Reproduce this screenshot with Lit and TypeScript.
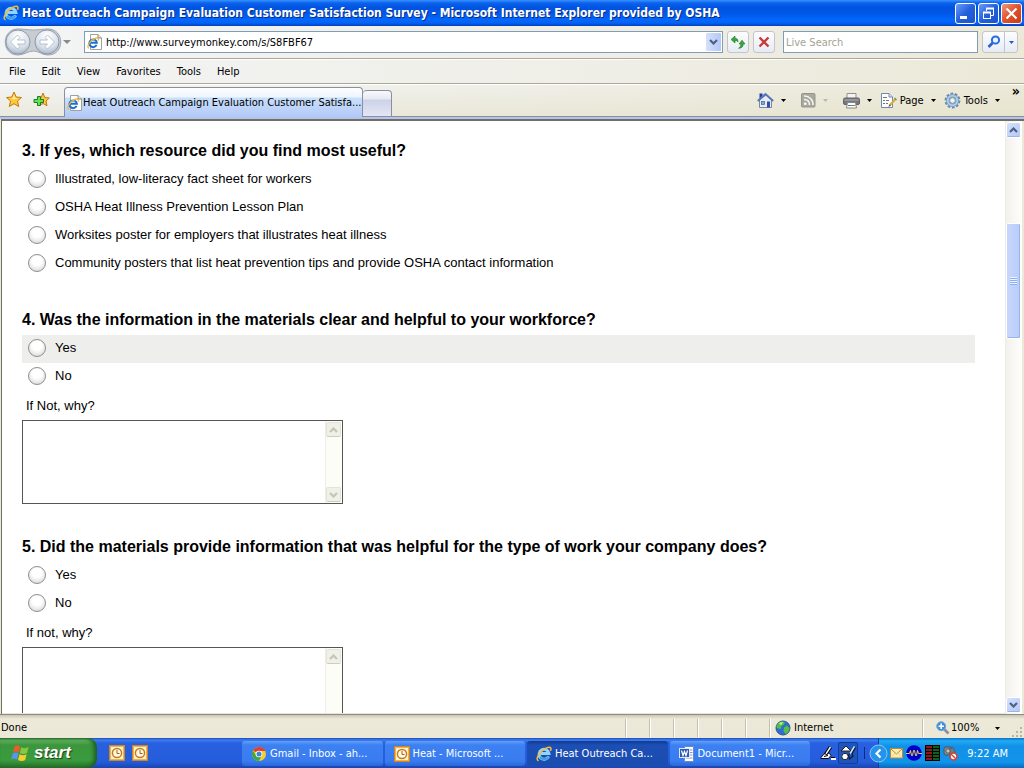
import { LitElement, html, css, svg } from "lit";
import { customElement, property } from "lit/decorators.js";

const ieMark = svg`
  <path d="M12.6 10.4A5 5 0 1 1 13 7.6H4.4" fill="none" stroke="#1c6fd0" stroke-width="2.6"/>
  <path d="M4.2 5.6A4.6 4.6 0 0 1 10.5 3.9" fill="none" stroke="#6fc0f5" stroke-width="1.2"/>
  <path d="M2.6 14.8C-.4 14 1.6 8.6 6.2 4.6C10 1.2 14.2 .4 14.9 2.2C15.2 3 14.9 4 14.4 4.9" fill="none" stroke="#f3b32b" stroke-width="1.5"/>`;

const icons: Record<string, unknown> = {
  ieTitle: html`<svg width="16" height="16" viewBox="0 0 16 16">
    <path d="M12.6 10.4A5 5 0 1 1 13 7.6H4.4" fill="none" stroke="#8fd4fb" stroke-width="3"/>
    <path d="M12.2 11A5 5 0 0 1 4 11.2" fill="none" stroke="#3a9be8" stroke-width="2"/>
    <path d="M2.6 14.8C-.4 14 1.6 8.6 6.2 4.6C10 1.2 14.2 .4 14.9 2.2C15.2 3 14.9 4 14.4 4.9" fill="none" stroke="#f6bb35" stroke-width="1.5"/></svg>`,
  iePage: html`<svg width="16" height="16" viewBox="0 0 16 16">
    <path d="M3.5 .5H11L14.5 4V15.5H3.5Z" fill="#fff" stroke="#a3a297"/><path d="M11 .5V4H14.5" fill="#e8e8e0" stroke="#8a8a80"/>
    <g transform="translate(0 3) scale(.76)">${ieMark}</g></svg>`,
  back: html`<svg width="58" height="28" viewBox="0 0 58 28">
    <defs><radialGradient id="orb" cx=".5" cy=".25" r=".8"><stop offset="0" stop-color="#fff"/><stop offset=".6" stop-color="#dbe2ea"/><stop offset="1" stop-color="#a3b2c6"/></radialGradient></defs>
    <path d="M14 1C20 1 24 2 29.5 2S39 1 44 1C61 1 61 27 44 27C38 27 35 23 29.5 23S20 27 14 27C-3 27-3 1 14 1Z" fill="#c9cdd2" stroke="#a2a7ae"/>
    <circle cx="14" cy="14" r="12" fill="url(#orb)" stroke="#8a99ae"/><circle cx="43" cy="14" r="12" fill="url(#orb)" stroke="#8a99ae"/>
    <path d="M6.5 14L13.5 7L16 9.5L13.5 12H21V16H13.5L16 18.5L13.5 21Z" fill="#fff" stroke="#a5b2c2" stroke-width=".8"/>
    <path d="M50.5 14L43.5 7L41 9.5L43.5 12H36V16H43.5L41 18.5L43.5 21Z" fill="#fff" stroke="#a5b2c2" stroke-width=".8"/></svg>`,
  refresh: html`<svg width="16" height="16" viewBox="0 0 16 16"><path d="M1 5.5L5 2V4.3C7 4.3 8 5 8 8C7.3 6.8 6.5 6.6 5 6.7V9Z" fill="#3aa53a" stroke="#1b7d22" stroke-width=".6"/><path d="M15 10L12 6.2L9 10H10.800C10.800 12 10.300 13.200 8.500 14.300C11.500 14.300 13.200 13 13.200 10Z" fill="#3aa53a" stroke="#1b7d22" stroke-width=".6"/></svg>`,
  stop: html`<svg width="12" height="12" viewBox="0 0 12 12"><path d="M1.5 1.5L10.5 10.5M10.5 1.5L1.5 10.5" stroke="#c83b3b" stroke-width="2.4"/></svg>`,
  search: html`<svg width="14" height="14" viewBox="0 0 14 14"><circle cx="8.5" cy="5" r="3.6" fill="#eaf4ff" stroke="#2d6be0" stroke-width="2"/><path d="M5.5 8L1.5 12" stroke="#2d5fc8" stroke-width="2.6"/></svg>`,
  star: html`<svg width="16" height="17" viewBox="0 0 16 17"><path d="M8 1L10.2 6L15.5 6.5L11.5 10L12.7 15.5L8 12.7L3.3 15.5L4.5 10L.5 6.5L5.8 6Z" fill="#fcc93c" stroke="#c4790f"/><path d="M8 3.5L9.2 7H12L8 8.5L5 7.5L7 7Z" fill="#fff0a8"/></svg>`,
  addStar: html`<svg width="17" height="17" viewBox="0 0 17 17"><path d="M10 2L11.8 6.5L16.3 7L13 10L14 14.7L10 12.5L6 14.7L7 10L4 7L8.3 6.5Z" fill="#fcc93c" stroke="#c4790f"/><path d="M4.5 5.5H7.5V8.5H10.5V11.5H7.5V14.5H4.5V11.5H1V8.5H4.5Z" fill="#6fdc5c" stroke="#178020"/></svg>`,
  home: html`<svg width="17" height="17" viewBox="0 0 17 17"><path d="M2.5 1.5H5.5V5L2.5 7Z" fill="#1c3fae"/><path d="M2.5 8L9 3L14.5 8V15.5H2.5Z" fill="#e9ebf2" stroke="#7b86a0"/><path d="M.8 9L8.5 2L16.2 9" fill="none" stroke="#5876b8" stroke-width="2"/><rect x="4.5" y="9.5" width="3" height="3" fill="#6fb1e4" stroke="#4a5f8a" stroke-width=".7"/><rect x="10" y="9.5" width="3" height="6" fill="#2f4fae"/></svg>`,
  rss: html`<svg width="15" height="15" viewBox="0 0 15 15"><rect x=".5" y=".5" width="13.5" height="13.5" rx="1" fill="#aaa99f" stroke="#96958c"/><circle cx="4.2" cy="10.8" r="1.3" fill="#fff"/><path d="M3 6.5A5 5 0 0 1 8.5 12M3 3A8.5 8.5 0 0 1 12 12" fill="none" stroke="#f4f4f0" stroke-width="1.6"/></svg>`,
  printer: html`<svg width="17" height="16" viewBox="0 0 17 16"><path d="M4 .5H13V6H4Z" fill="#f4f4f4" stroke="#909090"/><rect x=".5" y="5" width="16" height="6.500" rx="1.500" fill="#77787c" stroke="#606268"/><path d="M1.500 7H15.500" stroke="#b4b6ba"/><path d="M4.500 9.500H12.500L13.500 15H3.500Z" fill="#fff" stroke="#888"/><path d="M5 12.500H8" stroke="#3a7ad0"/><path d="M8 12.500H10" stroke="#42a642"/><path d="M10 12.500H12.500" stroke="#d5683c"/></svg>`,
  page: html`<svg width="17" height="17" viewBox="0 0 17 17"><path d="M1.5 1.5H9L12.5 5V15.5H1.5Z" fill="#fff" stroke="#7389ad"/><path d="M9 1.5V5H12.5" fill="#dbe5f3" stroke="#7389ad"/><path d="M3 5.5H7M3 8.5H5M6 8.5H9M3 11.5H5M6 11.5H8" stroke="#66758c"/><path d="M15.5 7L9.5 13.5" stroke="#e0a93b" stroke-width="2.2"/><path d="M9.7 12.2L8.2 15L11 13.8Z" fill="#4f5a55"/><path d="M14.5 6L16.5 8" stroke="#6a9a5c" stroke-width="1.5"/></svg>`,
  gear: html`<svg width="17" height="17" viewBox="0 0 17 17"><circle cx="8.5" cy="8.5" r="6.9" fill="none" stroke="#6787a8" stroke-width="2" stroke-dasharray="2.7 1.635"/><circle cx="8.5" cy="8.5" r="4.7" fill="none" stroke="#7ba2c6" stroke-width="3.6"/><circle cx="8.5" cy="8.5" r="4.7" fill="none" stroke="#b4d2ec" stroke-width="1.6"/><circle cx="8.5" cy="8.5" r="2.8" fill="#f4f3ea" stroke="#5f81a4" stroke-width=".8"/></svg>`,
  globe: html`<svg width="16" height="16" viewBox="0 0 16 16"><circle cx="8" cy="8" r="7" fill="#2d6fd0" stroke="#31518f"/><path d="M3 3.5C5 1 9 1.2 10 2.2L8.5 5L6.5 6L5.5 9L2 8C1 6.5 1.5 5 3 3.5ZM9 7.5L12 5.5L14.5 8C14.5 11 12.5 13.5 10.5 14L8.5 11Z" fill="#55c044"/><path d="M4 3.5Q6 1.8 8 2.5L6 5Z" fill="#c6f2b0"/></svg>`,
  zoom: html`<svg width="14" height="14" viewBox="0 0 14 14"><path d="M8 8L12.5 12.5" stroke="#8a8f98" stroke-width="2.6"/><circle cx="5.2" cy="5.2" r="4.5" fill="#3a8ee0" stroke="#7fa9cf"/><path d="M2.5 5.2H8M5.2 2.5V8" stroke="#fff" stroke-width="1.6"/></svg>`,
  flag: html`<svg width="19" height="19" viewBox="0 0 19 19"><path d="M3.5 2.5C5.5 1 7.5 1.2 9.2 2.5L7.8 8.5C6 7.2 4 7.2 2 8.5Z" fill="#ee5a2c"/><path d="M10.2 3.2C12.5 4.5 14.8 4.5 17.5 3L16 9C13.5 10.4 11 10.3 8.8 9Z" fill="#84c840"/><path d="M1.8 9.5C3.8 8.2 5.8 8.2 7.5 9.5L6 15.5C4.2 14.2 2.2 14.2 .2 15.5Z" fill="#5b94f4"/><path d="M8.5 10.2C10.8 11.5 13.2 11.5 15.6 10.2L14.2 16C11.8 17.5 9.2 17.4 7 16Z" fill="#fbcb32"/></svg>`,
  outlook: html`<svg width="16" height="16" viewBox="0 0 16 16"><rect x=".5" y=".5" width="15" height="15" fill="#f2b04e" stroke="#cf8526"/><rect x="2" y="2" width="12" height="12" fill="#fff3cf"/><circle cx="8" cy="8" r="4.6" fill="#fff9e6" stroke="#c57a1c" stroke-width="1.5"/><path d="M8 5V8.5H10.5" fill="none" stroke="#a5600e"/></svg>`,
  chrome: html`<svg width="16" height="16" viewBox="0 0 16 16"><circle cx="8" cy="8" r="7" fill="#f5ce32"/><path d="M8 8L2 4.5A7 7 0 0 1 14.5 5H8Z" fill="#e0402f"/><path d="M1.9 4.5A7 7 0 0 0 8 15L10.5 10L5 9.5Z" fill="#3fa648"/><circle cx="8" cy="8" r="3.3" fill="#fff"/><circle cx="8" cy="8" r="2.5" fill="#4285d8"/></svg>`,
  word: html`<svg width="16" height="16" viewBox="0 0 16 16"><path d="M5.5 .5H14.5V15.5H5.5Z" fill="#fff" stroke="#6d89c4"/><path d="M11 4H13.5M11 6.5H13.5M11 9H13.5M7 12H13.5" stroke="#7d93bd"/><rect x=".5" y="2.5" width="10" height="9" fill="#2d59b8" stroke="#dfe8fb"/><path d="M2.5 4.5L4 9.5L5.5 5.5L7 9.5L8.500 4.500" fill="none" stroke="#fff" stroke-width="1.2"/></svg>`,
  pen: html`<svg width="17" height="16" viewBox="0 0 17 16"><path d="M1 12.500L3.500 9.500L6.500 7.500L9.500 8.500L11 10.500L8.500 13.500H1Z" fill="#fff" stroke="#000"/><path d="M10.500 2L5.500 9.500" stroke="#000" stroke-width="3.400"/><path d="M10.500 2L6 8.800" stroke="#fff" stroke-width="1.400"/><path d="M4 11.500L8 10.500" stroke="#000"/><path d="M11 14H16" stroke="#fff" stroke-width="2"/><path d="M11 12.500H15" stroke="#000"/></svg>`,
  tools: html`<svg width="16" height="16" viewBox="0 0 16 16"><path d="M1 6L6 1L11 6Z" fill="#fff" stroke="#222"/><circle cx="5" cy="11.5" r="3.2" fill="#fff" stroke="#222"/><path d="M14.5 1.5L10 9" stroke="#dfe6f4" stroke-width="1.6"/><path d="M15.5 2.5L12 8.5L13 11L9.5 14L8.5 10.5L10 8.5" fill="none" stroke="#101828" stroke-width="1.2"/></svg>`,
  chevron: html`<svg width="19" height="19" viewBox="0 0 19 19"><circle cx="9.5" cy="9.5" r="8.5" fill="#2593ec" stroke="#8cc8f8"/><path d="M11.5 5.5L7.5 9.5L11.5 13.5" fill="none" stroke="#fff" stroke-width="2.2"/></svg>`,
  mail: html`<svg width="13" height="11" viewBox="0 0 13 11"><rect x=".5" y=".5" width="12" height="9.5" fill="#fdeeb0" stroke="#b98a35"/><path d="M1 1L6.5 6L12 1" fill="none" stroke="#c08a35"/><path d="M1 9.5L5 5M12 9.5L8 5" fill="none" stroke="#e8cc80" stroke-width=".7"/></svg>`,
  wave: html`<svg width="16" height="16" viewBox="0 0 16 16"><circle cx="8" cy="8" r="7.8" fill="#0000c8"/><path d="M0 8.500H3.500L4.500 5.500L5.500 10.500H6.500L7.500 5.500H8.500L9.500 10.500H10.500L11.500 5.500L12.500 8.500H16" fill="none" stroke="#ffe94a" stroke-width=".9"/></svg>`,
  meter: html`<svg width="15" height="16" viewBox="0 0 15 16"><rect width="15" height="16" fill="#000"/><path d="M4 1V15" stroke="#8c1818" stroke-width="6" stroke-dasharray="2 1"/><path d="M11 1V15" stroke="#126018" stroke-width="6" stroke-dasharray="2 1"/></svg>`,
  speaker: html`<svg width="15" height="15" viewBox="0 0 15 15"><rect x="1" y="1" width="8" height="8" rx="2" fill="#8b8f94" stroke="#4d5258"/><path d="M6 3L10 1.5L12 6L11 11L7 9Z" fill="#777b80" stroke="#4d5258" stroke-width=".8"/><circle cx="5" cy="5" r="2.2" fill="#c4c7ca" stroke="#555"/><circle cx="10.5" cy="10.5" r="3.4" fill="#fff" stroke="#d8412c" stroke-width="1.5"/><path d="M8.2 8.2L12.8 12.8" stroke="#d8412c" stroke-width="1.4"/></svg>`,
  up: html`<svg width="9" height="6" viewBox="0 0 9 6"><path d="M1 5L4.5 1.5L8 5" fill="none" stroke="currentColor" stroke-width="2.2"/></svg>`,
  down: html`<svg width="9" height="6" viewBox="0 0 9 6"><path d="M1 1L4.5 4.5L8 1" fill="none" stroke="currentColor" stroke-width="2.2"/></svg>`,
  tri: html`<svg width="5" height="3" viewBox="0 0 5 3"><path d="M0 0H5L2.5 3Z" fill="currentColor"/></svg>`,
  bigTri: html`<svg width="8" height="4" viewBox="0 0 8 4"><path d="M0 0H8L4 4Z" fill="currentColor"/></svg>`,
  minimize: html`<svg width="19" height="19" viewBox="0 0 19 19"><path d="M4 13.5H11" stroke="#fff" stroke-width="3"/></svg>`,
  restore: html`<svg width="19" height="19" viewBox="0 0 19 19"><path d="M7.5 7V4.5H14.5V11.5H12" fill="none" stroke="#fff"/><path d="M7 4.5H15" stroke="#fff" stroke-width="2"/><rect x="4.5" y="8.5" width="7" height="6" fill="none" stroke="#fff"/><path d="M4 8.5H12" stroke="#fff" stroke-width="2"/></svg>`,
  close: html`<svg width="19" height="19" viewBox="0 0 19 19"><path d="M4.5 4.5L14.5 14.5M14.5 4.5L4.5 14.5" stroke="#fff" stroke-width="2.2"/></svg>`,
  grip: html`<svg width="11" height="11" viewBox="0 0 11 11"><path d="M8 1H10V3H8ZM8 5H10V7H8ZM4 5H6V7H4ZM8 9H10V11H8ZM4 9H6V11H4ZM0 9H2V11H0Z" fill="#b8b4a2"/></svg>`,
};

const reset = css`
  :host, * { box-sizing: border-box; }
  button { font: inherit; color: inherit; background: none; border: 0; padding: 0; margin: 0; display: flex; align-items: center; white-space: nowrap; }
  svg { display: block; flex: none; }
`;

@customElement("window-title")
class WindowTitle extends LitElement {
  static styles = [reset, css`
    :host { display: flex; align-items: center; height: 26px; padding: 0 2px 0 3px; gap: 2px; color: #fff;
      background: linear-gradient(#3a93ff 0, #0a62ee 3px, #0053de 8px, #0058ea 14px, #0468fe 20px, #0462f4 23px, #0040c0 26px); }
    .title { flex: 1; margin: 0 0 0 1px; font: bold 12px/20px "DejaVu Sans Condensed", sans-serif; text-shadow: 1px 1px 0 #0a2a80; white-space: nowrap; overflow: hidden; }
    .btn { width: 21px; height: 21px; border: 1px solid #fff; border-radius: 3px; background: linear-gradient(135deg, #6c9cf8, #2460dc 50%, #1b52cc); }
    .close { background: linear-gradient(135deg, #f0987c, #e0502c 50%, #c83c18); }
  `];
  render() {
    return html`${icons.ieTitle}
      <h1 class="title">Heat Outreach Campaign Evaluation Customer Satisfaction Survey - Microsoft Internet Explorer provided by OSHA</h1>
      <button class="btn" aria-label="Minimize">${icons.minimize}</button>
      <button class="btn" aria-label="Restore">${icons.restore}</button>
      <button class="btn close" aria-label="Close">${icons.close}</button>`;
  }
}

@customElement("nav-bar")
class NavBar extends LitElement {
  static styles = [reset, css`
    :host { display: flex; align-items: center; height: 33px; padding: 0 6px 0 4px; border-bottom: 1px solid #aca899; }
    .history { width: 59px; }
    .recent { color: #8a8a88; width: 21px; justify-content: flex-start; }
    .address { flex: 1; display: flex; align-items: center; height: 22px; background: #fff; border: 1px solid #7f9db9; padding: 1px 1px 1px 2px; gap: 1px; }
    input { font: inherit; border: 0; padding: 1px 2px 0; background: #fff; outline: 0; min-width: 0; color: #000; }
    .url { flex: 1; }
    .drop { width: 15px; height: 18px; justify-content: center; background: linear-gradient(90deg, #d4e0fc, #b4c8f6); color: #4d6185; border-radius: 1px; }
    .tool { width: 22px; height: 22px; justify-content: center; border: 1px solid #c3c4cc; border-radius: 3px; background: linear-gradient(#fdfdfd, #e6ebf5); margin-left: 4px; }
    .query { width: 195px; height: 22px; border: 1px solid #7f9db9; margin: 0 4px 0 8px; }
    .query::placeholder { color: #a5a394; opacity: 1; }
    .go { display: flex; height: 22px; border: 1px solid #c3c4cc; border-radius: 3px; background: linear-gradient(#fdfdfd, #e6ebf5); }
    .go button { width: 21px; justify-content: center; }
    .go .more { width: 13px; border-left: 1px solid #c3c4cc; color: #1c5fd0; }
  `];
  render() {
    return html`<button class="history" aria-label="Back and forward">${icons.back}</button>
      <button class="recent" aria-label="Recent pages">${icons.bigTri}</button>
      <div class="address">${icons.iePage}
        <input class="url" aria-label="Address" value="http://www.surveymonkey.com/s/S8FBF67">
        <button class="drop" aria-label="Show addresses">${icons.down}</button></div>
      <button class="tool" aria-label="Refresh">${icons.refresh}</button>
      <button class="tool" aria-label="Stop">${icons.stop}</button>
      <input class="query" aria-label="Search" placeholder="Live Search">
      <div class="go"><button aria-label="Search">${icons.search}</button><button class="more" aria-label="Search options">${icons.tri}</button></div>`;
  }
}

@customElement("menu-bar")
class MenuBar extends LitElement {
  static styles = [reset, css`
    :host { display: flex; align-items: center; gap: 16px; height: 25px; padding: 1px 9px 0; border-top: 1px solid #fff; border-bottom: 1px solid #aca899; }
  `];
  render() {
    return ["File", "Edit", "View", "Favorites", "Tools", "Help"].map((m) => html`<button>${m}</button>`);
  }
}

@customElement("tab-bar")
class TabBar extends LitElement {
  static styles = [reset, css`
    :host { display: flex; height: 35px; border-top: 1px solid #fff; border-bottom: 2px solid #b4c4f0; background: linear-gradient(transparent, rgba(226, 223, 196, .5)); }
    .fav { display: flex; gap: 11px; width: 64px; border-bottom: 1px solid #8c8e9c; padding: 0 0 2px 6px; }
    .tab { width: 299px; border: 1px solid #8c8e9c; border-bottom: 0; border-radius: 4px 4px 0 0; margin-top: 2px; padding: 0 0 0 2px; background: linear-gradient(#fdfeff 0, #eef5fd 9px, #c8e0fb 10px, #b4c8f8); }
    .new { width: 29px; border: 1px solid #8c8e9c; border-left: 0; border-radius: 4px 4px 0 0; margin-top: 5px; background: linear-gradient(#f8f9fc 0, #e6e9f4 8px, #ccd3e8 9px, #e4e6f4); }
    .cmds { flex: 1; display: flex; justify-content: flex-end; border-bottom: 1px solid #8c8e9c; padding-right: 4px; }
    .cmd { gap: 3px; }
    .menu { width: 20px; padding-left: 7px; }
    .wide { width: 27px; }
    .off { color: #bcb9a8; }
    .more { align-self: flex-start; font: bold 14px/12px "DejaVu Sans Condensed", sans-serif; margin-left: 4px; }
  `];
  render() {
    return html`<div class="fav"><button aria-label="Favorites Center">${icons.star}</button><button aria-label="Add to Favorites">${icons.addStar}</button></div>
      <button class="tab">${icons.iePage}<span>Heat Outreach Campaign Evaluation Customer Satisfa...</span></button>
      <button class="new" aria-label="New Tab"></button>
      <div class="cmds">
        <button class="cmd" aria-label="Home">${icons.home}</button><button class="menu wide" aria-label="Home options">${icons.tri}</button>
        <button class="cmd" aria-label="Feeds">${icons.rss}</button><button class="menu wide off" aria-label="Feed options">${icons.tri}</button>
        <button class="cmd" aria-label="Print">${icons.printer}</button><button class="menu" aria-label="Print options">${icons.tri}</button>
        <button class="cmd">${icons.page}Page</button><button class="menu" aria-label="Page menu">${icons.tri}</button>
        <button class="cmd">${icons.gear}Tools</button><button class="menu" aria-label="Tools menu">${icons.tri}</button>
        <button class="more" aria-label="More commands">»</button>
      </div>`;
  }
}

interface Question { title: string; options: string[]; comment?: string; active?: number; }

const questions: Question[] = [
  { title: "3. If yes, which resource did you find most useful?", options: [
    "Illustrated, low-literacy fact sheet for workers", "OSHA Heat Illness Prevention Lesson Plan",
    "Worksites poster for employers that illustrates heat illness",
    "Community posters that list heat prevention tips and provide OSHA contact information"] },
  { title: "4. Was the information in the materials clear and helpful to your workforce?", options: ["Yes", "No"], comment: "If Not, why?", active: 0 },
  { title: "5. Did the materials provide information that was helpful for the type of work your company does?", options: ["Yes", "No"], comment: "If not, why?" },
];

@customElement("survey-question")
class SurveyQuestion extends LitElement {
  @property({ attribute: false }) question!: Question;
  static styles = [reset, css`
    :host { display: block; color: #000; font: 13px/18px "Liberation Sans", Arial, sans-serif; }
    fieldset { border: 0; margin: 0; padding: 0; min-width: 0; }
    legend { font: bold 16px/24px "Liberation Sans", Arial, sans-serif; padding: 1px 0 3px; }
    .option { display: flex; align-items: center; gap: 9px; height: 28px; padding: 0 6px 2px; }
    .active { background: #eeeeec; }
    .option input { appearance: none; width: 18px; height: 18px; margin: 0; flex: none; border: 1px solid #8e8e8e; border-radius: 50%; background: radial-gradient(circle at 50% 35%, #fff 35%, #e2e2e2 75%, #c4c4c4); }
    .why { display: block; padding: 6px 4px 5px; }
    .box { display: flex; width: 321px; height: 84px; border: 1px solid #555; margin-bottom: 1px; }
    textarea { flex: 1; border: 0; resize: none; outline: 0; padding: 2px; overflow: hidden; font: inherit; background: #fff; }
    .bar { display: flex; flex-direction: column; justify-content: space-between; width: 17px; border-left: 1px solid #efeee6; background: #fdfdf8; padding: 1px 1px 1px 0; }
    .bar button { width: 15px; height: 15px; justify-content: center; border: 1px solid #e4e3d8; border-bottom-color: #cfccb8; border-radius: 2px; background: #f1f0e8; color: #c5c4b8; }
  `];
  render() {
    const q = this.question;
    return html`<fieldset><legend>${q.title}</legend>
      ${q.options.map((o, i) => html`<label class="option ${q.active === i ? "active" : ""}"><input type="radio" name="answer"><span>${o}</span></label>`)}
      </fieldset>
      ${q.comment ? html`<label class="why" for="comment">${q.comment}</label>
        <div class="box"><textarea id="comment"></textarea>
          <div class="bar"><button aria-label="Scroll up">${icons.up}</button><button aria-label="Scroll down">${icons.down}</button></div></div>` : ""}`;
  }
}

@customElement("page-view")
class PageView extends LitElement {
  static styles = [reset, css`
    :host { display: flex; min-height: 0; background: #fff; border: solid #716f64; border-width: 2px 0 0 1px; margin-left: 1px; }
    .page { flex: 1; min-width: 0; overflow: hidden; display: flex; flex-direction: column; gap: 29px; padding: 17px 30px 0 20px; border-bottom: 1px solid #e8e6da; }
    survey-question { flex: none; }
    .scroll { display: flex; flex-direction: column; width: 17px; padding: 1px 1px 1px 0; border-left: 1px solid #eeede5; background: linear-gradient(90deg, #f3f1ec, #fefefb); }
    .edge { width: 2px; background: #ece9d8; }
    .scroll button { width: 15px; height: 16px; flex: none; justify-content: center; color: #4d6185; border: 1px solid #fff; border-radius: 2px; background: linear-gradient(135deg, #d4e0fd, #b4c8f6); box-shadow: inset 0 -1px #98b4ea; }
    .before { flex: 85; }
    .after { flex: 359; }
    .thumb { flex: 114; display: flex; align-items: center; justify-content: center; border: 1px solid #fff; border-radius: 2px; background: linear-gradient(90deg, #c8d6fb, #b8cdfb); box-shadow: inset -1px -1px #98b4ea; }
    .ridges { width: 7px; height: 8px; background: repeating-linear-gradient(#eef4fe 0 1px, #8cb0f8 1px 2px); }
  `];
  render() {
    return html`<main class="page">${questions.map((q) => html`<survey-question .question=${q}></survey-question>`)}</main>
      <div class="scroll"><button aria-label="Scroll up">${icons.up}</button><div class="before"></div>
        <div class="thumb"><div class="ridges"></div></div><div class="after"></div>
        <button aria-label="Scroll down">${icons.down}</button></div><div class="edge"></div>`;
  }
}

@customElement("status-bar")
class StatusBar extends LitElement {
  static styles = [reset, css`
    :host { display: flex; align-items: center; height: 24px; padding: 3px 1px 0; border-top: 1px solid #8f8d80; background: linear-gradient(#c9c6b6, #ece9d8 4px, #ebe8d7); }
    .done { flex: 1; }
    .cell { display: flex; align-items: center; height: 18px; width: 24px; border-left: 1px solid #c4c0ae; box-shadow: inset 1px 0 #fff; }
    .zone { width: 153px; padding-left: 5px; gap: 3px; }
    .zoom { width: 90px; padding-left: 13px; gap: 1px; }
    .zoom svg:last-child { margin-left: 15px; }
    .grip { align-self: flex-end; padding-bottom: 1px; }
  `];
  render() {
    return html`<span class="done">Done</span>
      ${[0, 1, 2, 3, 4, 5].map(() => html`<span class="cell"></span>`)}
      <span class="cell zone">${icons.globe}Internet</span>
      <button class="cell zoom">${icons.zoom}100%${icons.tri}</button><span class="grip">${icons.grip}</span>`;
  }
}

@customElement("task-bar")
class TaskBar extends LitElement {
  static styles = [reset, css`
    :host { display: flex; height: 30px; color: #fff; background: linear-gradient(#1c48b8 0, #3c80f0 2px, #2860e0 5px, #245cdc 24px, #1a44b0); }
    .start { width: 97px; padding: 0 0 0 11px; gap: 4px; border-radius: 0 9px 9px 0; background: linear-gradient(#2c7030 0, #62b462 2px, #3c963c 7px, #3a9c3e 22px, #26702a); box-shadow: inset -3px 0 4px #1c5c24; font: italic bold 17px/24px "Liberation Sans", sans-serif; text-shadow: 1px 1px 1px #1d3f1d; }
    .quick { display: flex; gap: 7px; padding-left: 12px; width: 145px; }
    .tasks { flex: 1; display: grid; grid-template-columns: repeat(4, 1fr); gap: 2px; padding: 3px 0 2px; min-width: 0; }
    .task { gap: 3px; padding: 1px 8px 0 9px; border-radius: 3px; background: linear-gradient(#64a0fa 0, #3c80f2 4px, #387cf0 20px, #2c66d8); overflow: hidden; }
    .on { background: linear-gradient(#123a90, #1c4eb4 4px, #1b4cb0); }
    .tools { display: flex; align-items: center; width: 59px; padding-left: 10px; gap: 1px; }
    .boxed { padding: 2px 1px; border: 1px solid #163c94; background: #1d55c0; border-radius: 2px; }
    .bar { width: 1px; height: 12px; background: #0b2a80; margin-left: 5px; }
    .show { width: 9px; position: relative; z-index: 1; }
    .tray { display: flex; align-items: center; width: 146px; padding-left: 11px; gap: 3px; border-left: 1px solid #0a3c9c; background: linear-gradient(#0c70c8 0, #20acf4 3px, #1290e8 8px, #1194ea 24px, #0c68c0); }
    .clock { margin-left: auto; padding: 2px 16px 0 0; white-space: nowrap; }
  `];
  render() {
    return html`<button class="start">${icons.flag}start</button>
      <div class="quick"><button aria-label="Outlook">${icons.outlook}</button><button aria-label="Outlook calendar">${icons.outlook}</button></div>
      <div class="tasks">
        <button class="task">${icons.chrome}Gmail - Inbox - ah...</button>
        <button class="task">${icons.outlook}Heat - Microsoft ...</button>
        <button class="task on">${icons.ieTitle}Heat Outreach Ca...</button>
        <button class="task">${icons.word}Document1 - Micr...</button>
      </div>
      <div class="tools"><button aria-label="Handwriting">${icons.pen}</button><button class="boxed" aria-label="Writing tools">${icons.tools}</button><span class="bar"></span></div>
      <button class="show" aria-label="Show hidden icons">${icons.chevron}</button>
      <div class="tray">${icons.mail}${icons.wave}${icons.meter}${icons.speaker}<time class="clock">9:22 AM</time></div>`;
  }
}

@customElement("app-root")
class AppRoot extends LitElement {
  static styles = css`
    :host { display: flex; flex-direction: column; height: 100vh; overflow: hidden; color: #000; background: #ece9d8; font: 11px/14px "DejaVu Sans Condensed", Tahoma, sans-serif; }
    .chrome { flex: none; background: linear-gradient(90deg, #f3f4f5, #efeee6 60%, #ece9d8); }
    window-title, status-bar, task-bar { flex: none; }
    page-view { flex: 1; }
  `;
  render() {
    return html`<window-title></window-title>
      <header class="chrome"><nav-bar></nav-bar><menu-bar></menu-bar><tab-bar></tab-bar></header>
      <page-view></page-view><status-bar></status-bar><task-bar></task-bar>`;
  }
}
